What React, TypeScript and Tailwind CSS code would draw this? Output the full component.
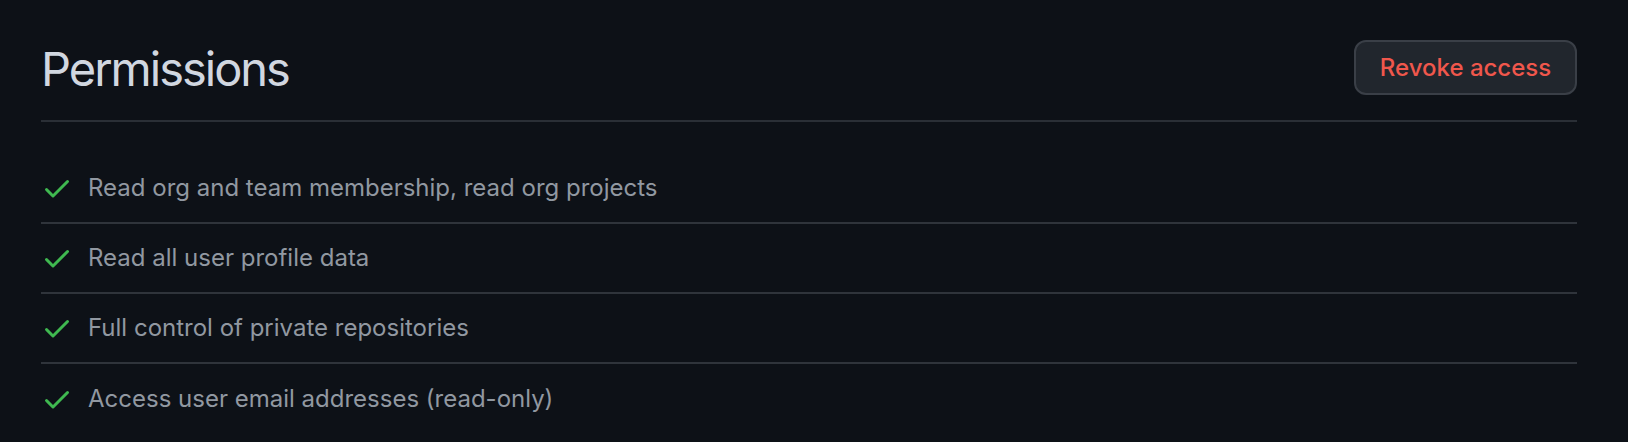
const permissions = [
  'Read org and team membership, read org projects',
  'Read all user profile data',
  'Full control of private repositories',
  'Access user email addresses (read-only)',
]

function CheckIcon() {
  return (
    <svg viewBox="0 0 16 16" width={32} height={32} className="shrink-0 fill-[#3fb950]">
      <path d="M13.78 4.22a.75.75 0 0 1 0 1.06l-7.25 7.25a.75.75 0 0 1-1.06 0L2.22 9.28a.751.751 0 0 1 .018-1.042.751.751 0 0 1 1.042-.018L6 10.94l6.72-6.72a.75.75 0 0 1 1.06 0Z" />
    </svg>
  )
}

export default function App() {
  return (
    <div className="min-h-[442px] w-full bg-[#0d1117] pl-[41px] pr-[51px] font-['Inter',sans-serif]">
      <div className="flex items-center justify-between border-b-2 border-[#2a2f36] pt-[40px] pb-[25px]">
        <h2 className="text-[47px] leading-none font-normal text-[#d1d7e0] tracking-[-2px] pt-[2px]">Permissions</h2>
        <button className="h-[55px] w-[223px] rounded-[12px] border-2 border-[#3a3f47] bg-[#21262d] text-[24px] font-medium text-[#f0574c]">
          Revoke access
        </button>
      </div>
      <ul className="mt-[32px]">
        {permissions.map((p, i) => (
          <li
            key={p}
            className={`flex h-[70px] items-center ${i < permissions.length - 1 ? 'border-b-2 border-[#2f343b]' : ''}`}
          >
            <CheckIcon />
            <span className="ml-[15px] text-[24px] text-[#9198a1]">{p}</span>
          </li>
        ))}
      </ul>
    </div>
  )
}
